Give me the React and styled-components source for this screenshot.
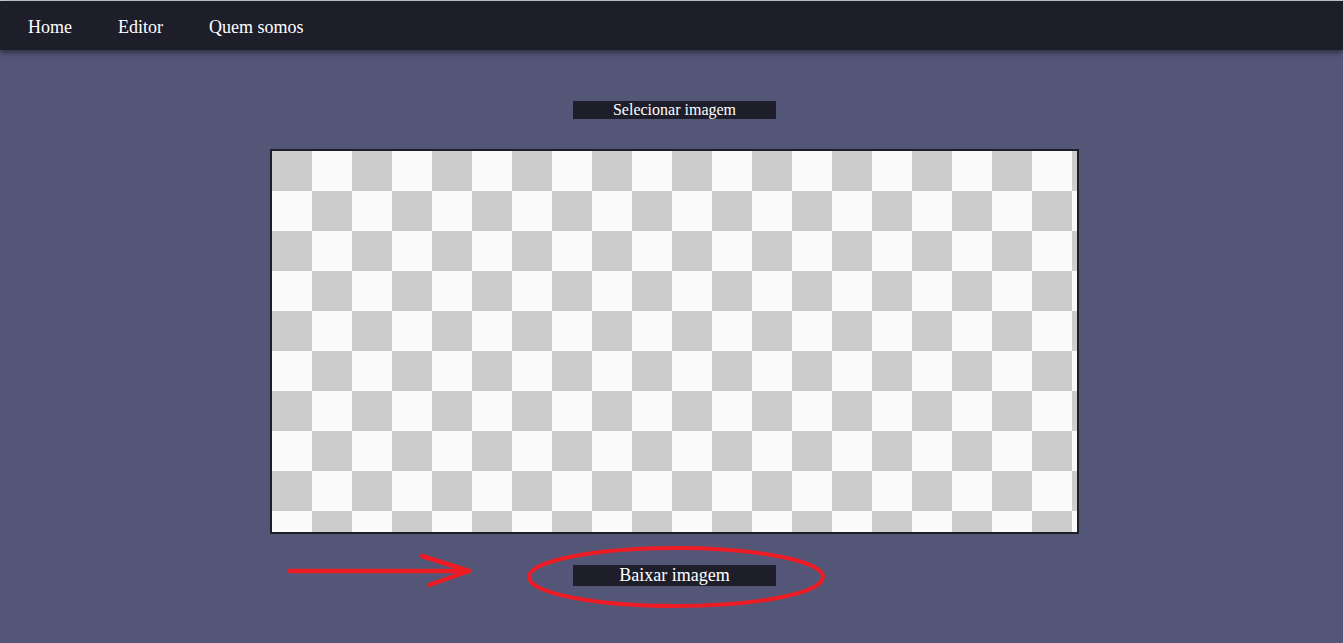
import React from "react";
import styled, { createGlobalStyle } from "styled-components";

const serif = `"Liberation Serif", "Times New Roman", "DejaVu Serif", serif`;

const GlobalStyle = createGlobalStyle`
  html, body {
    margin: 0;
    padding: 0;
    background: #535677;
  }
  body {
    font-family: ${serif};
  }
`;

const Page = styled.div`
  min-height: 100vh;
  background: #535677;
  border-top: 1px solid #d6d6da;
  box-sizing: border-box;
`;

const Nav = styled.nav`
  display: flex;
  align-items: center;
  box-sizing: border-box;
  height: 49px;
  padding: 4px 0 0 5px;
  background: #1e1e2b;
  box-shadow: 0 2px 6px rgba(0, 0, 0, 0.55);
  position: relative;
`;

const NavLink = styled.a`
  padding: 0 23px;
  color: #ffffff;
  font-family: ${serif};
  font-size: 18px;
  text-decoration: none;
  cursor: pointer;
`;

const Main = styled.main`
  display: flex;
  flex-direction: column;
  align-items: center;
  padding: 51px 0 40px 6px;
`;

const Button = styled.button`
  width: 203px;
  height: ${({ $big }) => ($big ? "21px" : "18px")};
  padding: 0;
  border: none;
  background: #1e1e2b;
  color: #ffffff;
  font-family: ${serif};
  font-size: ${({ $big }) => ($big ? "18px" : "16px")};
  line-height: ${({ $big }) => ($big ? "21px" : "18px")};
  cursor: pointer;
`;

const Canvas = styled.div`
  width: 805px;
  height: 381px;
  margin: 30px 0 31px;
  border: 2px solid #1e1e2b;
  background-color: #fafafa;
  background-image: conic-gradient(
    #fafafa 25%,
    #cccccc 0 50%,
    #fafafa 0 75%,
    #cccccc 0
  );
  background-size: 80px 80px;
`;

const DownloadRow = styled.div`
  position: relative;
  width: 809px;
  display: flex;
  justify-content: center;
`;

const Annotation = styled.svg`
  position: absolute;
  left: 0;
  top: -20px;
  width: 809px;
  height: 66px;
  overflow: visible;
  pointer-events: none;
`;

const App = () => {
  return (
    <>
      <GlobalStyle />
      <Page>
        <Nav>
          <NavLink>Home</NavLink>
          <NavLink>Editor</NavLink>
          <NavLink>Quem somos</NavLink>
        </Nav>
        <Main>
          <Button>Selecionar imagem</Button>
          <Canvas />
          <DownloadRow>
            <Button $big>Baixar imagem</Button>
            <Annotation viewBox="0 0 809 66">
              <g stroke="#ed1c24" strokeWidth="4.5" strokeLinecap="round" fill="none">
                <line x1="20" y1="26" x2="198" y2="26" />
                <line x1="152" y1="11" x2="199" y2="26" />
                <line x1="159" y1="40" x2="199" y2="26" />
                <ellipse cx="406" cy="32" rx="147" ry="29" strokeWidth="4" />
              </g>
            </Annotation>
          </DownloadRow>
        </Main>
      </Page>
    </>
  );
};

export default App;
